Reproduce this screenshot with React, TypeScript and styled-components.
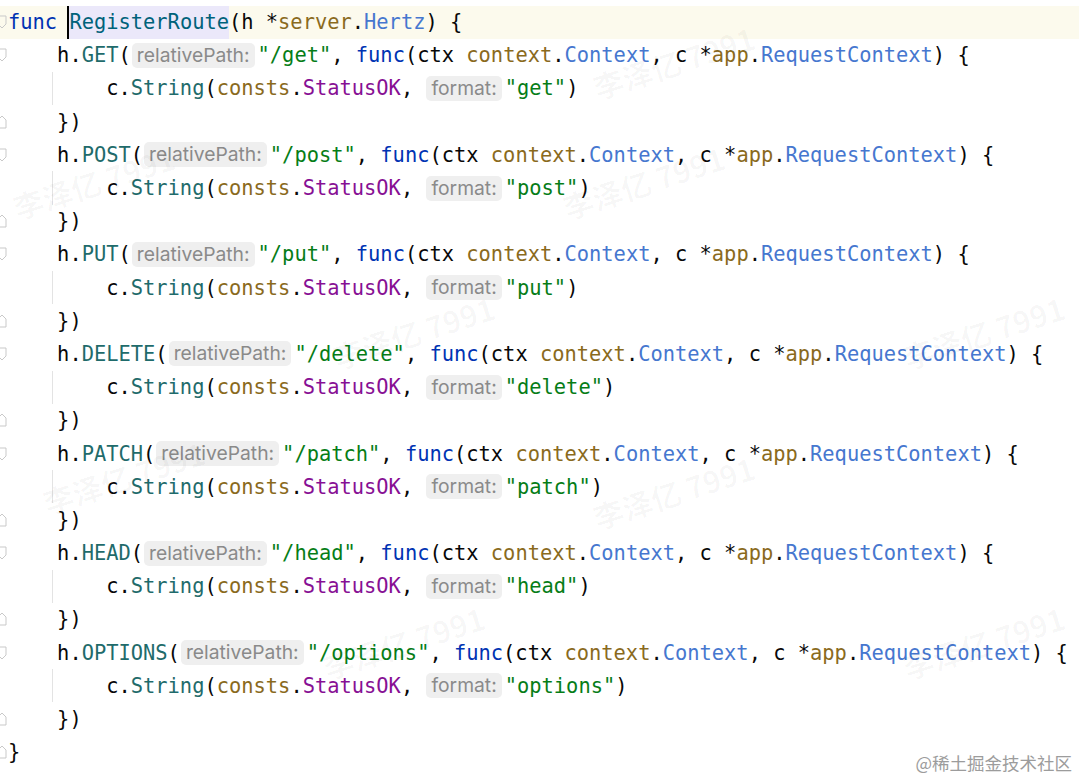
import React from "react";
import styled, { createGlobalStyle } from "styled-components";

const Global = createGlobalStyle`
  html, body { margin: 0; padding: 0; background: #ffffff; }
  body { width: 1079px; height: 778px; overflow: hidden; }
`;

type Kind = "kw" | "decl" | "plain" | "pkg" | "type" | "method" | "const" | "str";

const colors: Record<Kind, string> = {
  kw: "#0033b3",
  decl: "#00627a",
  plain: "#080808",
  pkg: "#8a6a1d",
  type: "#4677cf",
  method: "#1f6b6b",
  const: "#871094",
  str: "#067d17",
};

const Editor = styled.div`
  position: relative;
  width: 1079px;
  height: 778px;
  padding-top: 5.5px;
  box-sizing: border-box;
  background: #ffffff;
  overflow: hidden;
  display: flex;
  flex-direction: column;
`;

const Row = styled.div<{ $current?: boolean; $guide?: boolean }>`
  position: relative;
  display: flex;
  align-items: center;
  height: 33.2px;
  flex: 0 0 33.2px;
  background: ${(p) => (p.$current ? "#fcfaed" : "transparent")};
  ${(p) =>
    p.$guide
      ? `&::before {
          content: "";
          position: absolute;
          left: 52px;
          top: 0;
          bottom: 0;
          width: 1px;
          background: #e3e3e3;
        }`
      : ""}
`;

const Gutter = styled.div`
  width: 8px;
  flex: 0 0 8px;
  height: 100%;
  display: flex;
  align-items: center;
  overflow: hidden;
`;

const Code = styled.div`
  font-family: "DejaVu Sans Mono", "Liberation Mono", monospace;
  font-size: 20.4px;
  white-space: pre;
  color: #080808;
  display: flex;
  align-items: center;
  height: 100%;
`;

const Tok = styled.span<{ $k: Kind }>`
  color: ${(p) => colors[p.$k]};
`;

const Usage = styled.span`
  display: inline-flex;
  align-items: center;
  height: 100%;
  background: #ebe8fa;
  color: #00627a;
  border-left: 2px solid #000000;
  margin-left: -2px;
`;

const Hint = styled.span`
  display: inline-block;
  font-family: Inter, "Noto Sans", sans-serif;
  font-size: 19.3px;
  color: #8a8a8a;
  background: #efefef;
  border-radius: 5px;
  height: 25px;
  line-height: 25px;
  padding: 0 5px;
  margin: 0 3px 0 1px;
`;

const FoldMark = styled.svg`
  display: block;
  margin-left: -3px;
`;

const Watermark = styled.div<{ $x: number; $y: number }>`
  position: absolute;
  left: ${(p) => p.$x}px;
  top: ${(p) => p.$y}px;
  transform: rotate(-18deg);
  font-family: "Noto Sans CJK SC", "Noto Sans", sans-serif;
  font-size: 30px;
  font-weight: 700;
  color: rgba(0, 0, 0, 0.03);
  white-space: nowrap;
  pointer-events: none;
`;

const Credit = styled.div`
  position: absolute;
  right: 7px;
  top: 751px;
  font-family: "Noto Sans CJK SC", "Noto Sans", sans-serif;
  font-size: 17.5px;
  line-height: 24px;
  color: #9c9c9c;
  white-space: nowrap;
`;

type Piece = [Kind, string] | ["hint", string] | ["usage", string];

const Fold = ({ up }: { up?: boolean }) => (
  <FoldMark width="10" height="14" viewBox="0 0 10 14">
    {up ? (
      <path d="M1 13 V5 L5 1 L9 5 V13 Z" fill="none" stroke="#c9c9c9" strokeWidth="1" />
    ) : (
      <path d="M1 1 H9 V9 L5 13 L1 9 Z" fill="none" stroke="#c9c9c9" strokeWidth="1" />
    )}
  </FoldMark>
);

type LineDef = { pieces: Piece[]; fold?: "down" | "up"; current?: boolean; guide?: boolean };

const routes: [string, string, string][] = [
  ["GET", "/get", "get"],
  ["POST", "/post", "post"],
  ["PUT", "/put", "put"],
  ["DELETE", "/delete", "delete"],
  ["PATCH", "/patch", "patch"],
  ["HEAD", "/head", "head"],
  ["OPTIONS", "/options", "options"],
];

const lines: LineDef[] = [
  {
    current: true,
    fold: "down",
    pieces: [
      ["kw", "func"],
      ["plain", " "],
      ["usage", "RegisterRoute"],
      ["plain", "(h *"],
      ["pkg", "server"],
      ["plain", "."],
      ["type", "Hertz"],
      ["plain", ") {"],
    ],
  },
];

routes.forEach(([m, path, body]) => {
  lines.push({
    fold: "down",
    pieces: [
      ["plain", "    h."],
      ["method", m],
      ["plain", "("],
      ["hint", "relativePath:"],
      ["str", `"${path}"`],
      ["plain", ", "],
      ["kw", "func"],
      ["plain", "(ctx "],
      ["pkg", "context"],
      ["plain", "."],
      ["type", "Context"],
      ["plain", ", c *"],
      ["pkg", "app"],
      ["plain", "."],
      ["type", "RequestContext"],
      ["plain", ") {"],
    ],
  });
  lines.push({
    guide: true,
    pieces: [
      ["plain", "        c."],
      ["method", "String"],
      ["plain", "("],
      ["pkg", "consts"],
      ["plain", "."],
      ["const", "StatusOK"],
      ["plain", ", "],
      ["hint", "format:"],
      ["str", `"${body}"`],
      ["plain", ")"],
    ],
  });
  lines.push({ fold: "up", pieces: [["plain", "    })"]] });
});

lines.push({ fold: "up", pieces: [["plain", "}"]] });

const watermarks: [number, number][] = [
  [590, 40],
  [560, 160],
  [10, 160],
  [330, 310],
  [900, 310],
  [590, 470],
  [40, 455],
  [320, 620],
  [900, 620],
];

export default function App() {
  return (
    <>
      <Global />
      <Editor>
        {lines.map((ln, i) => (
          <Row key={i} $current={ln.current} $guide={ln.guide}>
            <Gutter>{ln.fold ? <Fold up={ln.fold === "up"} /> : null}</Gutter>
            <Code>
              {ln.pieces.map((p, j) => {
                if (p[0] === "hint") return <Hint key={j}>{p[1]}</Hint>;
                if (p[0] === "usage") return <Usage key={j}>{p[1]}</Usage>;
                return (
                  <Tok key={j} $k={p[0] as Kind}>
                    {p[1]}
                  </Tok>
                );
              })}
            </Code>
          </Row>
        ))}
        {watermarks.map(([x, y], i) => (
          <Watermark key={i} $x={x} $y={y}>
            李泽亿 7991
          </Watermark>
        ))}
        <Credit>@稀土掘金技术社区</Credit>
      </Editor>
    </>
  );
}
